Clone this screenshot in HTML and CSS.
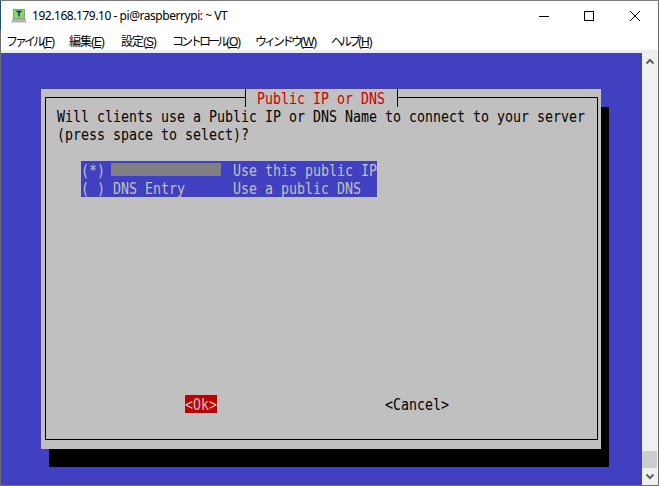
FILE: index.html
```html
<!DOCTYPE html>
<html lang="ja">
<head>
<meta charset="utf-8">
<title>192.168.179.10 - pi@raspberrypi: ~ VT</title>
<link rel="stylesheet" href="styles.css">
</head>
<body>
<div class="window">
  <header class="titlebar">
    <svg class="app-icon" width="16" height="16" viewBox="0 0 16 16">
      <rect x="2" y="1" width="12" height="10" fill="#8f9a8f"/>
      <rect x="3" y="2" width="10" height="8" fill="#7be05a"/>
      <path d="M5.500 3.500h5M8 3.500v5" stroke="#1010d0" stroke-width="1.400" fill="none"/>
      <rect x="1" y="11" width="14" height="3" fill="#b4b4a8"/>
      <rect x="0" y="14" width="16" height="1" fill="#d8d8d0"/>
    </svg>
    <span class="title-text">192.168.179.10 - pi@raspberrypi: ~ VT</span>
    <div class="controls">
      <svg class="ctl" width="46" height="16" viewBox="0 0 46 16"><path d="M19 8.500h10" stroke="#000" fill="none"/></svg>
      <svg class="ctl" width="46" height="16" viewBox="0 0 46 16"><rect x="18.500" y="3.500" width="9" height="9" stroke="#000" fill="none"/></svg>
      <svg class="ctl" width="46" height="16" viewBox="0 0 46 16"><path d="M18 3l10 10M28 3L18 13" stroke="#000" fill="none"/></svg>
    </div>
  </header>
  <nav class="menubar">
    <span class="menu m-fa"><span class="kana">ファイル</span>(<u>F</u>)</span>
    <span class="menu m-he">編集(<u>E</u>)</span>
    <span class="menu m-se">設定(<u>S</u>)</span>
    <span class="menu m-ko"><span class="kana">コントロール</span>(<u>O</u>)</span>
    <span class="menu m-wi"><span class="kana">ウィンドウ</span>(<u>W</u>)</span>
    <span class="menu m-he2"><span class="kana">ヘルプ</span>(<u>H</u>)</span>
  </nav>
  <div class="client">
    <main class="terminal">
      <section class="dialog">
        <div class="frame">
          <h1 class="dlg-title"><span class="t">Public IP or DNS</span></h1>
          <div class="prompt">
            <p class="line"><span class="seg"><span class="t">Will clients use a Public IP or DNS Name </span></span><span class="t">to connect to your server</span></p>
            <p class="line"><span class="t">(press space to select)?</span></p>
          </div>
          <ul class="list">
            <li class="row"><span class="tag"><span class="t">(*)</span></span><span class="field"><i class="redacted"></i></span><span class="t">Use this public IP</span></li>
            <li class="row"><span class="tag"><span class="t">( )</span></span><span class="field"><span class="t">DNS Entry</span></span><span class="t">Use a public DNS</span></li>
          </ul>
          <div class="buttons">
            <span class="btn btn-ok"><span class="t">&lt;Ok&gt;</span></span>
            <span class="btn btn-cancel"><span class="t">&lt;Cancel&gt;</span></span>
          </div>
        </div>
      </section>
    </main>
    <aside class="scrollbar">
      <svg width="16" height="17" viewBox="0 0 16 17"><path d="M4.500 10.500L8 7l3.500 3.500" stroke="#606060" stroke-width="2" fill="none"/></svg>
      <div class="track"></div>
      <div class="thumb"></div>
      <svg width="16" height="17" viewBox="0 0 16 17"><path d="M4.500 6.500L8 10l3.500-3.500" stroke="#606060" stroke-width="2" fill="none"/></svg>
    </aside>
  </div>
</div>
</body>
</html>
```
FILE: styles.css
```css
* { box-sizing: border-box; margin: 0; padding: 0; }
html, body { width: 659px; height: 486px; overflow: hidden; background: #fff; }
.window {
  width: 659px; height: 486px;
  display: flex; flex-direction: column;
  border-top: 1px solid #7a7a7a;
  border-left: 1px solid #6e6e6e;
  border-right: 1px solid #6e6e6e;
  border-bottom: 1px solid #6e6e6e;
  background: #fff;
}
.titlebar {
  height: 29px; flex: none;
  display: flex; align-items: center;
  padding-left: 10px;
  font: 12px "Noto Sans", "Open Sans", sans-serif;
  color: #000;
  box-shadow: -1px 0 0 #17557f;
}
.app-icon { flex: none; margin-right: 5px; }
.title-text { white-space: nowrap; letter-spacing: -0.45px; }
.controls { margin-left: auto; display: flex; }
.ctl { display: block; }
.menubar {
  height: 20px; flex: none;
  display: flex; align-items: center;
  padding-left: 5px;
  font: 12px "Liberation Sans", "Noto Sans CJK JP", sans-serif;
  color: #000;
  white-space: nowrap;
  letter-spacing: -1px;
}
.kana { letter-spacing: -3px; }
.menu u { text-underline-offset: 1px; }
.m-fa { width: 63px; }
.m-he { width: 52px; }
.m-se { width: 51px; }
.m-ko { width: 83px; }
.m-wi { width: 76px; }
.client {
  flex: 1; display: flex; min-height: 0;
  border-top: 3px solid;
  border-image: linear-gradient(#ececec 0 67%, #777 67%) 3;
}
.terminal {
  width: 641px; flex: none;
  background: #4040c0;
  padding: 36px 0 0 40px;
  font: 15.4px/18px "DejaVu Sans Mono", monospace;
  color: #000;
}
.t {
  display: inline-block;
  white-space: pre;
  transform: translateY(1px) scaleX(0.8636);
  transform-origin: 0 50%;
}
.dialog {
  width: 560px; height: 360px;
  background: #c0c0c0;
  box-shadow: 8px 18px 0 #000;
  padding: 8px 3px 9px 4px;
}
.frame {
  position: relative;
  height: 343px;
  border: 1px solid #000;
  padding-top: 9px;
  padding-left: 11px;
  display: flex; flex-direction: column;
}
.dlg-title {
  position: absolute;
  left: 199px; top: -9px;
  width: 153px; height: 18px;
  background: #c0c0c0;
  border-left: 1px solid #000;
  border-right: 1px solid #000;
  font: inherit;
  color: #cc0000;
  padding-left: 11px;
}
.prompt { height: 54px; white-space: nowrap; }
.line { display: flex; height: 18px; }
.seg { width: 328px; flex: none; }
.list {
  list-style: none;
  width: 296px;
  margin-left: 24px;
  background: #4040c0;
  color: #c0c0c0;
}
.row { display: flex; height: 18px; white-space: nowrap; }
.tag { width: 32px; flex: none; }
.field { width: 120px; flex: none; }
.redacted {
  display: block;
  width: 110px; height: 13px;
  margin: 2px 0 0 -2px;
  background: #808080;
}
.buttons {
  margin-top: 198px;
  display: flex;
  padding-left: 128px;
}
.btn { display: block; height: 18px; white-space: nowrap; flex: none; }
.btn-ok { width: 32px; background: #c00000; color: #c0c0c0; }
.btn-cancel { margin-left: 168px; }
.scrollbar {
  flex: 1;
  background: #f0f0f0;
  display: flex; flex-direction: column;
}
.scrollbar svg { flex: none; display: block; }
.track { flex: 1; }
.thumb { height: 17px; width: 15px; background: #cdcdcd; }
```
